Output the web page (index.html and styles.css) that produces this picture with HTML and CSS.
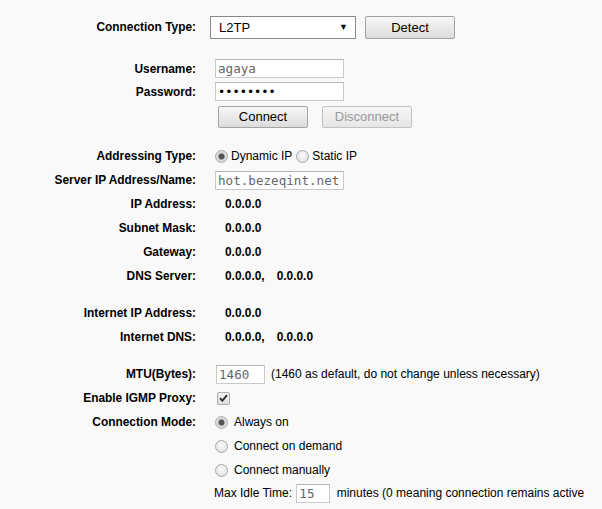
FILE: index.html
```html
<!DOCTYPE html>
<html>
<head>
<meta charset="utf-8">
<link rel="stylesheet" href="styles.css">
</head>
<body>
<div class="page">
  <div class="row">
    <div class="label">Connection Type:</div>
    <div class="value">
      <div class="select"><span>L2TP</span><span class="arrow">▼</span></div>
      <button class="btn detect">Detect</button>
    </div>
  </div>
  <div class="spacer s18"></div>
  <div class="row r23">
    <div class="label">Username:</div>
    <div class="value"><input class="text wide" type="text" value="agaya"></div>
  </div>
  <div class="row r23">
    <div class="label">Password:</div>
    <div class="value"><input class="text wide pw" type="password" value="12345678"></div>
  </div>
  <div class="row r27">
    <div class="label"></div>
    <div class="value btns">
      <button class="btn">Connect</button>
      <button class="btn disabled">Disconnect</button>
    </div>
  </div>
  <div class="spacer s14"></div>
  <div class="row">
    <div class="label">Addressing Type:</div>
    <div class="value">
      <span class="radio checked"></span><span class="opt">Dynamic IP</span>
      <span class="radio r2"></span><span class="opt">Static IP</span>
    </div>
  </div>
  <div class="row">
    <div class="label">Server IP Address/Name:</div>
    <div class="value"><input class="text wide" type="text" value="hot.bezeqint.net"></div>
  </div>
  <div class="row">
    <div class="label">IP Address:</div>
    <div class="value"><span class="ip">0.0.0.0</span></div>
  </div>
  <div class="row">
    <div class="label">Subnet Mask:</div>
    <div class="value"><span class="ip">0.0.0.0</span></div>
  </div>
  <div class="row">
    <div class="label">Gateway:</div>
    <div class="value"><span class="ip">0.0.0.0</span></div>
  </div>
  <div class="row">
    <div class="label">DNS Server:</div>
    <div class="value"><span class="ip">0.0.0.0,</span><span class="ip second">0.0.0.0</span></div>
  </div>
  <div class="spacer s13"></div>
  <div class="row">
    <div class="label">Internet IP Address:</div>
    <div class="value"><span class="ip">0.0.0.0</span></div>
  </div>
  <div class="row">
    <div class="label">Internet DNS:</div>
    <div class="value"><span class="ip">0.0.0.0,</span><span class="ip second">0.0.0.0</span></div>
  </div>
  <div class="spacer s13"></div>
  <div class="row">
    <div class="label">MTU(Bytes):</div>
    <div class="value">
      <input class="text mtu" type="text" value="1460">
      <span class="note">(1460 as default, do not change unless necessary)</span>
    </div>
  </div>
  <div class="row">
    <div class="label">Enable IGMP Proxy:</div>
    <div class="value">
      <span class="checkbox"><svg width="9" height="8" viewBox="0 0 9 8"><path d="M1 4.2 L3.4 6.6 L8 1.2" fill="none" stroke="#333" stroke-width="2"/></svg></span>
    </div>
  </div>
  <div class="row">
    <div class="label">Connection Mode:</div>
    <div class="value"><span class="radio checked"></span><span class="mode">Always on</span></div>
  </div>
  <div class="row">
    <div class="label"></div>
    <div class="value"><span class="radio"></span><span class="mode">Connect on demand</span></div>
  </div>
  <div class="row">
    <div class="label"></div>
    <div class="value"><span class="radio"></span><span class="mode">Connect manually</span></div>
  </div>
  <p class="idle">Max Idle Time: <input class="text idletime" type="text" value="15"> minutes (0 meaning connection remains active all the time.)</p>
</div>
</body>
</html>
```

FILE: styles.css
```css
html, body {
  margin: 0;
  padding: 0;
}
body {
  background: #f9f9f9;
  font-family: "Liberation Sans", Arial, sans-serif;
  font-size: 12px;
  color: #000;
  overflow: hidden;
}
.page {
  padding-top: 15px;
}
.row {
  display: flex;
  align-items: center;
  height: 24px;
}
.row.r23 {
  height: 23px;
}
.row.r27 {
  height: 27px;
}
.spacer.s18 { height: 18px; }
.spacer.s14 { height: 14px; }
.spacer.s13 { height: 13px; }
.label {
  flex: none;
  width: 196px;
  text-align: right;
  font-weight: bold;
  font-size: 11.9px;
}
.value {
  margin-left: 14px;
  display: flex;
  align-items: center;
  white-space: nowrap;
}
.select {
  box-sizing: border-box;
  width: 146px;
  height: 23px;
  border: 1px solid #8a8a8a;
  background: #fff;
  display: flex;
  align-items: center;
  justify-content: space-between;
  padding: 0 7px 0 8px;
  font-size: 13px;
}
.select .arrow {
  font-size: 9px;
  color: #111;
}
.btn {
  box-sizing: border-box;
  width: 90px;
  height: 23px;
  border: 1px solid #a3a3a3;
  border-radius: 2px;
  background: linear-gradient(#f7f7f7, #dcdcdc);
  font-family: "Liberation Sans", Arial, sans-serif;
  font-size: 13px;
  color: #000;
  padding: 0;
}
.detect {
  margin-left: 9px;
}
.btns {
  padding-left: 8px;
  gap: 14px;
}
.btns .btn {
  height: 22px;
}
.btn.disabled {
  color: #999;
  border-color: #c2c2c2;
  background: linear-gradient(#f5f5f5, #e6e6e6);
}
.text {
  box-sizing: border-box;
  height: 19px;
  border: 1px solid #c9c9c9;
  border-top-color: #b5b5b5;
  background: #fff;
  font-family: "DejaVu Sans Mono", "Liberation Mono", monospace;
  font-size: 12.6px;
  color: #666;
  padding: 0 2px;
  margin: 0;
  outline: none;
}
.wide {
  width: 129px;
  margin-left: 5px;
}
.pw {
  color: #000;
  font-size: 12px;
}
.radio {
  box-sizing: border-box;
  display: inline-block;
  width: 13px;
  height: 13px;
  border-radius: 50%;
  border: 1px solid #a9a9a9;
  background: radial-gradient(circle at 50% 40%, #fafafa, #dcdcdc);
  margin-left: 5px;
  flex: none;
}
.radio.checked {
  background: radial-gradient(circle, #555 0, #555 2.6px, #cfcfcf 3.4px, #e8e8e8 6px);
}
.radio.r2 {
  margin-left: 4px;
}
.opt {
  margin-left: 3px;
}
.mode {
  margin-left: 6px;
}
.ip {
  font-weight: bold;
  font-size: 11.9px;
  margin-left: 15px;
}
.ip.second {
  margin-left: 12px;
}
.mtu {
  width: 49px;
  margin-left: 6px;
}
.note {
  margin-left: 6px;
}
.checkbox {
  box-sizing: border-box;
  display: inline-flex;
  align-items: center;
  justify-content: center;
  width: 13px;
  height: 13px;
  margin-left: 7px;
  border: 1px solid #ababab;
  border-radius: 2px;
  background: linear-gradient(#f4f4f4, #dedede);
}
.idle {
  margin: -1px 0 0 0;
  line-height: 24px;
  padding-left: 3px;
  padding-right: 10px;
  text-indent: 211px;
}
.idletime {
  width: 34px;
  vertical-align: middle;
  text-indent: 0;
  margin: 0 3px 0 1px;
}
```
